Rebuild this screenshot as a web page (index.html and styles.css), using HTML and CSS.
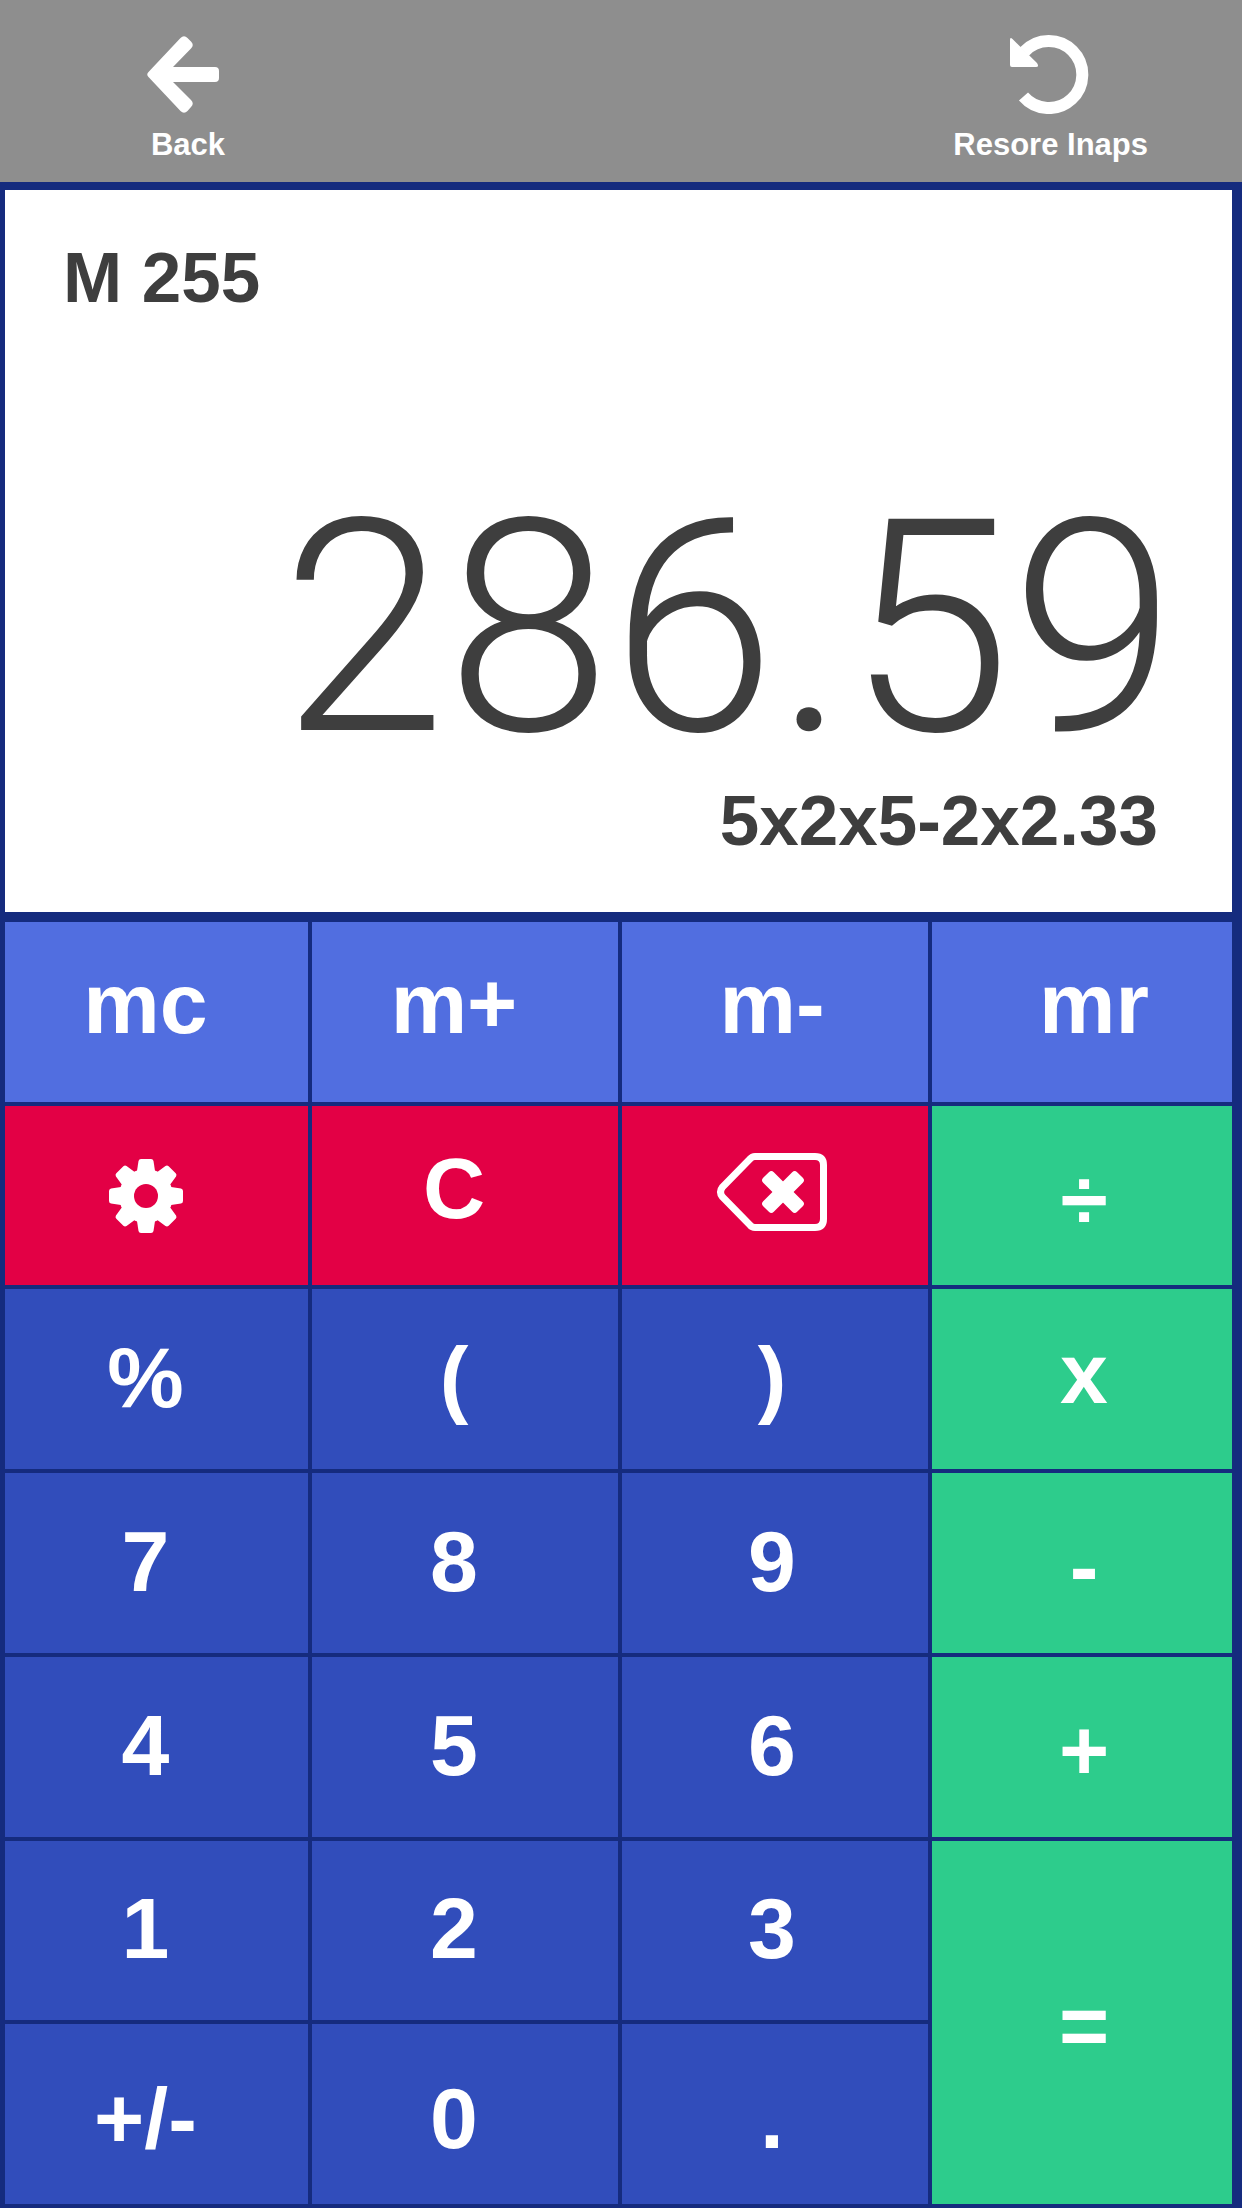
FILE: index.html
```html
<!DOCTYPE html>
<html lang="en">
<head>
<meta charset="utf-8">
<meta name="viewport" content="width=device-width, initial-scale=1">
<title>Calculator</title>
<link rel="stylesheet" href="styles.css">
</head>
<body>
<header class="toolbar">
  <button type="button" class="tool">
    <svg class="tool-icon" width="84" height="80" viewBox="0 0 84 80" aria-hidden="true">
      <path d="M2.500 38 34.500 4Q38 .5 41.500 4L45 7.500Q48.500 11 45 14.500L27 33H69Q73 33 73 37V44Q73 48 69 48H27L45 66Q48.500 69.500 45 73L41.500 77Q38 80.500 34.500 77L2.500 43Q0 40.500 2.500 38Z" fill="#fff"/>
    </svg>
    <span>Back</span>
  </button>
  <button type="button" class="tool">
    <svg class="tool-icon" width="84" height="80" viewBox="0 0 84 80" aria-hidden="true">
      <path d="M14.500 62.500A33.500 33.500 0 1 0 15.500 17.500" fill="none" stroke="#fff" stroke-width="12"/>
      <path d="M1 6Q1 2.500 3.500 5L28 29Q30.500 33 27 33H3Q1 33 1 31Z" fill="#fff"/>
    </svg>
    <span>Resore Inaps</span>
  </button>
</header>
<main class="calculator">
  <section class="display" aria-label="Display">
    <p class="memory">M 255</p>
    <output class="result">286.59</output>
    <p class="expression">5x2x5-2x2.33</p>
  </section>
  <section class="keypad" aria-label="Keypad">
    <button type="button" class="key mem">mc</button>
    <button type="button" class="key mem">m+</button>
    <button type="button" class="key mem">m-</button>
    <button type="button" class="key mem recall">mr</button>

    <button type="button" class="key edit" aria-label="Settings">
      <svg width="76" height="76" viewBox="-38 -38 76 76" aria-hidden="true">
        <g fill="#fff">
          <path id="cog" d="M-9-25-7.500-35Q-7-37-5-37H5Q7-37 7.500-35L9-25V25L7.500 35Q7 37 5 37H-5Q-7 37-7.500 35L-9 25Z"/>
          <use href="#cog" transform="rotate(45)"/>
          <use href="#cog" transform="rotate(90)"/>
          <use href="#cog" transform="rotate(135)"/>
          <circle r="27"/>
        </g>
        <circle r="12" fill="#e30045"/>
      </svg>
    </button>
    <button type="button" class="key edit clear">C</button>
    <button type="button" class="key edit erase" aria-label="Delete">
      <svg width="112" height="80" viewBox="0 0 112 80" aria-hidden="true">
        <path d="M39 4.500H99Q107.500 4.500 107.500 13V67Q107.500 75.500 99 75.500H39Q36 75.500 34 73L6.500 45Q2.500 40 6.500 35L34 7Q36 4.500 39 4.500Z" fill="none" stroke="#fff" stroke-width="7"/>
        <g transform="translate(67 40)" fill="#fff">
          <rect x="-24" y="-7.500" width="48" height="15" rx="3.500" transform="rotate(45)"/>
          <rect x="-24" y="-7.500" width="48" height="15" rx="3.500" transform="rotate(-45)"/>
        </g>
      </svg>
    </button>
    <button type="button" class="key op">÷</button>

    <button type="button" class="key">%</button>
    <button type="button" class="key">(</button>
    <button type="button" class="key">)</button>
    <button type="button" class="key op times">x</button>

    <button type="button" class="key">7</button>
    <button type="button" class="key">8</button>
    <button type="button" class="key">9</button>
    <button type="button" class="key op">-</button>

    <button type="button" class="key">4</button>
    <button type="button" class="key">5</button>
    <button type="button" class="key">6</button>
    <button type="button" class="key op">+</button>

    <button type="button" class="key">1</button>
    <button type="button" class="key">2</button>
    <button type="button" class="key">3</button>
    <button type="button" class="key op equals">=</button>

    <button type="button" class="key last">+/-</button>
    <button type="button" class="key last">0</button>
    <button type="button" class="key last">.</button>
  </section>
</main>
</body>
</html>
```
FILE: styles.css
```css
* {
  box-sizing: border-box;
}

body {
  margin: 0;
  min-height: 100vh;
  display: flex;
  flex-direction: column;
  background: #152b7e;
  font-family: "Liberation Sans", Arial, sans-serif;
  font-weight: 700;
}

button {
  margin: 0;
  border: 0;
  font: inherit;
  color: #fff;
  cursor: pointer;
}

p {
  margin: 0;
}

.toolbar {
  display: flex;
  justify-content: space-between;
  padding: 34px 94px 19px 146px;
  background: #8e8e8e;
}

.tool {
  display: flex;
  flex-direction: column;
  align-items: center;
  gap: 13px;
  padding: 0;
  background: none;
  font-size: 31px;
  line-height: 36px;
}

.tool-icon {
  display: block;
}

.calculator {
  flex: 1;
  display: flex;
  flex-direction: column;
  gap: 10px;
  padding: 8px 10px 4px 5px;
}

.display {
  display: flex;
  flex-direction: column;
  padding: 48px 56px 51px 58px;
  background: #fff;
  color: #3e3e3e;
}

.memory,
.expression {
  font-size: 71px;
  line-height: 80px;
}

.result {
  margin-top: 159px;
  text-align: right;
  font-family: Roboto, "Liberation Sans", sans-serif;
  font-weight: 300;
  font-size: 297px;
  line-height: 304px;
}

.expression {
  padding-right: 18px;
  text-align: right;
}

.keypad {
  flex: 1;
  display: grid;
  grid-template-columns: 303fr 306fr 306fr 300fr;
  grid-auto-rows: 1fr;
  gap: 4px;
}

.key {
  display: flex;
  align-items: center;
  justify-content: center;
  padding: 0 22px 4px 0;
  background: #314dbb;
  font-size: 86px;
  line-height: 96px;
}

.key:nth-child(4n + 3) {
  padding-right: 6px;
}

.mem {
  padding-bottom: 18px;
  background: #516ee0;
}

.edit {
  padding-bottom: 0;
  background: #e30045;
}

.clear {
  padding-bottom: 16px;
}

.erase {
  padding-bottom: 8px;
}

.op {
  padding: 6px 0 0 4px;
  background: #2dcc8c;
}

.times {
  padding: 0 0 12px 4px;
}

.recall {
  padding: 0 0 18px 24px;
}

.equals {
  grid-row: span 2;
}

.last {
  padding-top: 8px;
  padding-bottom: 0;
}
```
